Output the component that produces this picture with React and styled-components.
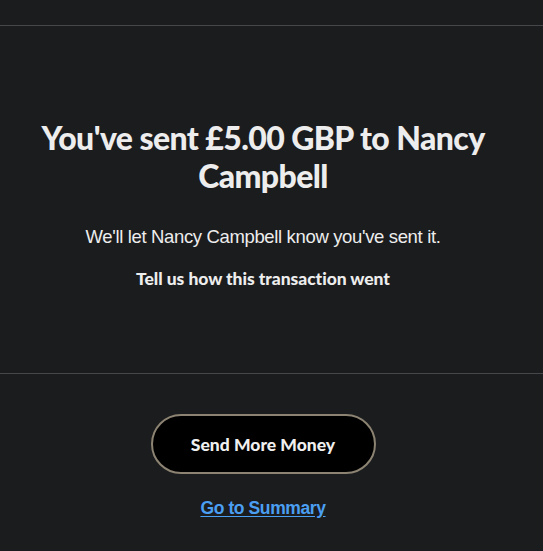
import styled, { createGlobalStyle } from "styled-components";

const GlobalStyle = createGlobalStyle`
  html, body {
    margin: 0;
    padding: 0;
    background: #1b1c1e;
  }
  body {
    font-family: Lato, "Liberation Sans", sans-serif;
    color: #eeeeee;
  }
`;

const Page = styled.div`
  min-height: 551px;
  background: #1b1c1e;
  display: flex;
  flex-direction: column;
`;

const TopBar = styled.div`
  height: 25px;
  border-bottom: 1px solid #46474a;
`;

const Confirmation = styled.section`
  height: 348px;
  border-bottom: 1px solid #46474a;
  display: flex;
  flex-direction: column;
  align-items: center;
  padding: 93px 47px 0 30px;
  box-sizing: border-box;
  text-align: center;
`;

const Title = styled.h1`
  margin: 0;
  font-family: Lato, sans-serif;
  font-weight: 900;
  font-size: 32px;
  line-height: 38px;
  letter-spacing: -0.6px;
  color: #ededed;
  max-width: 460px;
`;

const Note = styled.p`
  margin: 31px 0 0;
  font-family: "Liberation Sans", Arial, sans-serif;
  font-size: 18.5px;
  line-height: 22px;
  letter-spacing: -0.35px;
  color: #ededed;
`;

const Feedback = styled.p`
  margin: 20px 0 0;
  font-family: Lato, sans-serif;
  font-weight: 900;
  font-size: 17.5px;
  line-height: 22px;
  letter-spacing: -0.05px;
  color: #ededed;
`;

const Actions = styled.div`
  display: flex;
  flex-direction: column;
  align-items: center;
  padding: 40px 17px 0 0;
  gap: 24px;
`;

const PrimaryButton = styled.button`
  width: 225px;
  height: 60px;
  border-radius: 30px;
  border: 2px solid #8c8373;
  background: #000;
  color: #efefef;
  font-family: Lato, sans-serif;
  font-weight: 900;
  font-size: 17.5px;
  letter-spacing: 0;
  cursor: pointer;
`;

const TextLink = styled.a`
  font-family: "Liberation Sans", Arial, sans-serif;
  font-weight: 700;
  font-size: 17.5px;
  line-height: 20px;
  letter-spacing: -0.4px;
  color: #4b9ff2;
  text-decoration: underline;
  text-underline-offset: 2px;
  cursor: pointer;
`;

export default function App() {
  return (
    <>
      <GlobalStyle />
      <Page>
        <TopBar />
        <Confirmation>
          <Title>You've sent £5.00 GBP to Nancy Campbell</Title>
          <Note>We'll let Nancy Campbell know you've sent it.</Note>
          <Feedback>Tell us how this transaction went</Feedback>
        </Confirmation>
        <Actions>
          <PrimaryButton>Send More Money</PrimaryButton>
          <TextLink>Go to Summary</TextLink>
        </Actions>
      </Page>
    </>
  );
}
